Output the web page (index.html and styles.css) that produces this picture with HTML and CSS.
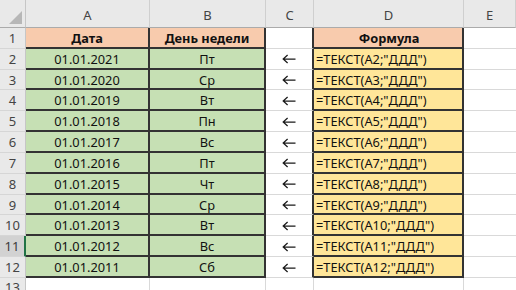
FILE: index.html
```html
<!DOCTYPE html>
<html lang="ru">
<head>
<meta charset="utf-8">
<link rel="stylesheet" href="styles.css">
</head>
<body>
<div class="sheet">
  <div class="corner"><span class="tri"></span></div>
  <div class="colh">A</div><div class="colh">B</div><div class="colh">C</div><div class="colh">D</div><div class="colh last">E</div>

  <div class="rowh">1</div>
  <div class="cell hd a">Дата</div><div class="cell hd b">День недели</div><div class="cell c"></div><div class="cell hd d ctr">Формула</div><div class="cell e"></div>

  <div class="rowh">2</div>
  <div class="cell g a">01.01.2021</div><div class="cell g b">Пт</div><div class="cell c"><svg class="arr" viewBox="0 0 14 10"><path d="M13.5 5H1.2M5.6 1L1.2 5L5.6 9"/></svg></div><div class="cell y d">=ТЕКСТ(A2;"ДДД")</div><div class="cell e"></div>

  <div class="rowh">3</div>
  <div class="cell g a">01.01.2020</div><div class="cell g b">Ср</div><div class="cell c"><svg class="arr" viewBox="0 0 14 10"><path d="M13.5 5H1.2M5.6 1L1.2 5L5.6 9"/></svg></div><div class="cell y d">=ТЕКСТ(A3;"ДДД")</div><div class="cell e"></div>

  <div class="rowh">4</div>
  <div class="cell g a">01.01.2019</div><div class="cell g b">Вт</div><div class="cell c"><svg class="arr" viewBox="0 0 14 10"><path d="M13.5 5H1.2M5.6 1L1.2 5L5.6 9"/></svg></div><div class="cell y d">=ТЕКСТ(A4;"ДДД")</div><div class="cell e"></div>

  <div class="rowh">5</div>
  <div class="cell g a">01.01.2018</div><div class="cell g b">Пн</div><div class="cell c"><svg class="arr" viewBox="0 0 14 10"><path d="M13.5 5H1.2M5.6 1L1.2 5L5.6 9"/></svg></div><div class="cell y d">=ТЕКСТ(A5;"ДДД")</div><div class="cell e"></div>

  <div class="rowh">6</div>
  <div class="cell g a">01.01.2017</div><div class="cell g b">Вс</div><div class="cell c"><svg class="arr" viewBox="0 0 14 10"><path d="M13.5 5H1.2M5.6 1L1.2 5L5.6 9"/></svg></div><div class="cell y d">=ТЕКСТ(A6;"ДДД")</div><div class="cell e"></div>

  <div class="rowh">7</div>
  <div class="cell g a">01.01.2016</div><div class="cell g b">Пт</div><div class="cell c"><svg class="arr" viewBox="0 0 14 10"><path d="M13.5 5H1.2M5.6 1L1.2 5L5.6 9"/></svg></div><div class="cell y d">=ТЕКСТ(A7;"ДДД")</div><div class="cell e"></div>

  <div class="rowh">8</div>
  <div class="cell g a">01.01.2015</div><div class="cell g b">Чт</div><div class="cell c"><svg class="arr" viewBox="0 0 14 10"><path d="M13.5 5H1.2M5.6 1L1.2 5L5.6 9"/></svg></div><div class="cell y d">=ТЕКСТ(A8;"ДДД")</div><div class="cell e"></div>

  <div class="rowh">9</div>
  <div class="cell g a">01.01.2014</div><div class="cell g b">Ср</div><div class="cell c"><svg class="arr" viewBox="0 0 14 10"><path d="M13.5 5H1.2M5.6 1L1.2 5L5.6 9"/></svg></div><div class="cell y d">=ТЕКСТ(A9;"ДДД")</div><div class="cell e"></div>

  <div class="rowh">10</div>
  <div class="cell g a">01.01.2013</div><div class="cell g b">Вт</div><div class="cell c"><svg class="arr" viewBox="0 0 14 10"><path d="M13.5 5H1.2M5.6 1L1.2 5L5.6 9"/></svg></div><div class="cell y d">=ТЕКСТ(A10;"ДДД")</div><div class="cell e"></div>

  <div class="rowh sel">11</div>
  <div class="cell g a">01.01.2012</div><div class="cell g b">Вс</div><div class="cell c"><svg class="arr" viewBox="0 0 14 10"><path d="M13.5 5H1.2M5.6 1L1.2 5L5.6 9"/></svg></div><div class="cell y d">=ТЕКСТ(A11;"ДДД")</div><div class="cell e"></div>

  <div class="rowh">12</div>
  <div class="cell g a">01.01.2011</div><div class="cell g b">Сб</div><div class="cell c"><svg class="arr" viewBox="0 0 14 10"><path d="M13.5 5H1.2M5.6 1L1.2 5L5.6 9"/></svg></div><div class="cell y d">=ТЕКСТ(A12;"ДДД")</div><div class="cell e"></div>

  <div class="rowh">13</div>
  <div class="cell blank"></div><div class="cell blank"></div><div class="cell blank"></div><div class="cell blank"></div><div class="cell blank e"></div>
</div>
</body>
</html>
```
FILE: styles.css
```css
html, body {
  margin: 0;
  padding: 0;
  background: #ffffff;
  overflow: hidden;
}
.sheet {
  width: 516px;
  height: 290px;
  display: grid;
  grid-template-columns: 26px 124px 116px 48px 150px 1fr;
  grid-template-rows: 28px repeat(12, 20.83px) 1fr;
  font-family: "Noto Sans", "Open Sans", sans-serif;
  font-size: 12.8px;
  color: #111;
  overflow: hidden;
}
.corner {
  background: #e9e9e9;
  border-right: 1px solid #c6c6c6;
  border-bottom: 1px solid #ababab;
  position: relative;
}
.tri {
  position: absolute;
  right: 3px;
  bottom: 3px;
  width: 0;
  height: 0;
  border-left: 13px solid transparent;
  border-bottom: 13px solid #b7b7b7;
}
.colh {
  background: #e9e9e9;
  border-right: 1px solid #cfcfcf;
  border-bottom: 1px solid #ababab;
  display: flex;
  align-items: center;
  justify-content: center;
  color: #444;
  font-size: 13px;
  padding-top: 2px;
  box-sizing: border-box;
}
.rowh {
  background: #e9e9e9;
  border-right: 1px solid #c6c6c6;
  border-bottom: 1px solid #d6d6d6;
  display: flex;
  align-items: center;
  justify-content: center;
  color: #444;
  font-size: 13px;
  box-sizing: border-box;
}
.rowh.sel {
  background: #d2d2d2;
  border-right: 2px solid #217346;
  color: #3a3a3a;
}
.cell {
  box-sizing: border-box;
  display: flex;
  align-items: center;
  justify-content: center;
  border-right: 1px solid #d9d9d9;
  border-bottom: 1px solid #d9d9d9;
  white-space: nowrap;
  overflow: hidden;
  padding-top: 1px;
}
.hd { background: #f8cbad; font-weight: 700; }
.g { background: #c6e0b4; }
.y { background: #ffe699; }
.a, .b {
  border-right: 2px solid #333;
  border-bottom: 2px solid #333;
}
.c {
  border-right: 2px solid #333;
}
.d {
  border-right: 2px solid #333;
  border-bottom: 2px solid #333;
  justify-content: flex-start;
  padding-left: 2px;
}
.d.ctr { justify-content: center; }
.blank { border-bottom: none; }
.e { border-right: none; }
.arr {
  width: 14px;
  height: 10px;
  fill: none;
  stroke: #1a1a1a;
  stroke-width: 1.25;
}
```
